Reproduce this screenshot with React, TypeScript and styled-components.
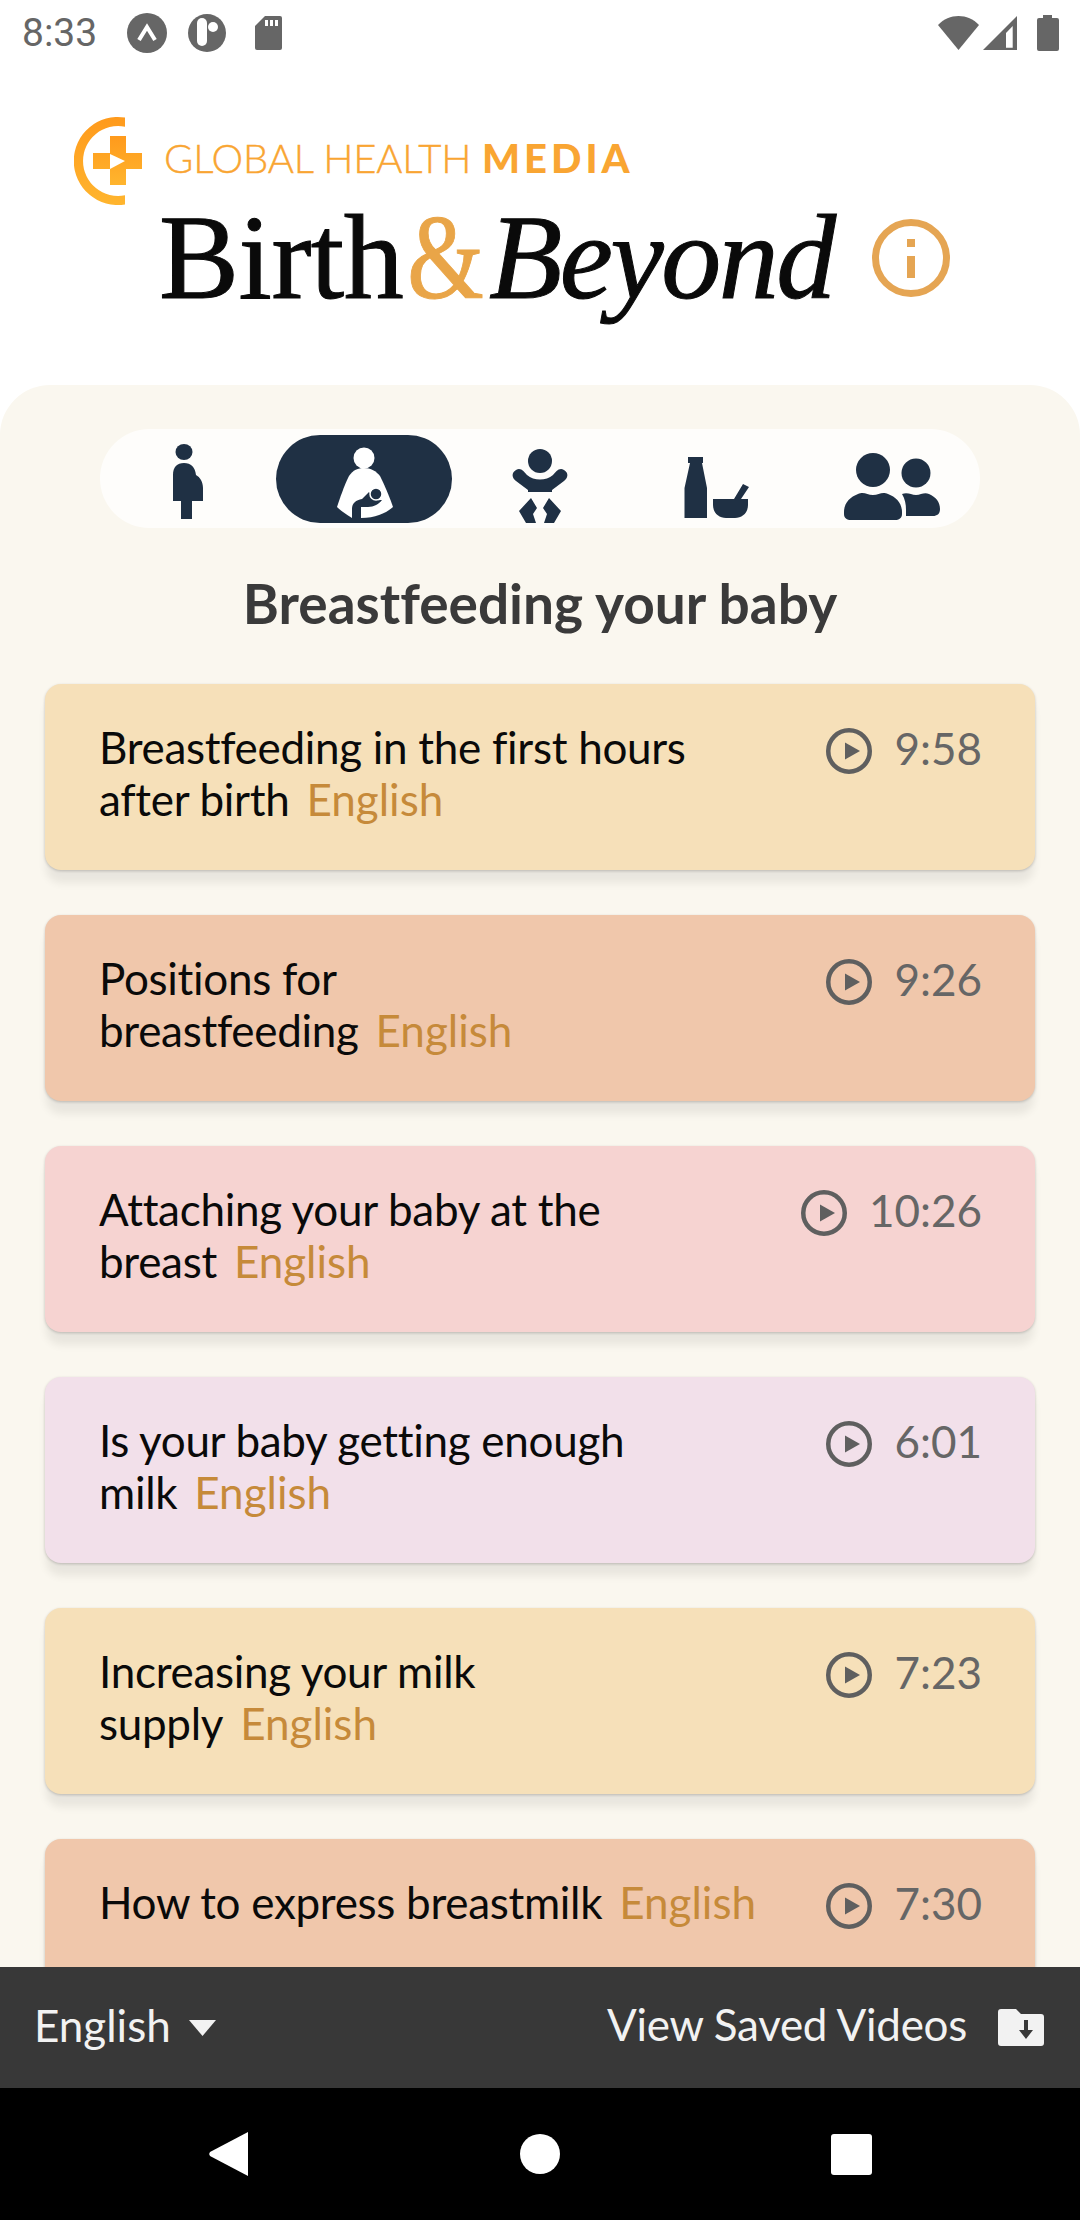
import * as React from "react";
import styled, { createGlobalStyle } from "styled-components";

const GlobalStyle = createGlobalStyle`
  html, body {
    margin: 0;
    padding: 0;
    background: #ffffff;
  }
  * {
    box-sizing: border-box;
  }
`;

const Screen = styled.div`
  width: 1080px;
  height: 2220px;
  display: flex;
  flex-direction: column;
  overflow: hidden;
  background: #ffffff;
  font-family: "Lato", "Liberation Sans", sans-serif;
  font-variant-ligatures: none;
`;

const StatusBar = styled.div`
  height: 66px;
  flex: none;
  display: flex;
  align-items: center;
  justify-content: space-between;
  padding: 0 21px 0 22px;
  color: #666666;
`;

const StatusGroup = styled.div`
  display: flex;
  align-items: center;
`;

const Clock = styled.span`
  font-family: "Roboto", sans-serif;
  font-size: 39px;
  font-weight: 400;
  width: 105px;
`;

const StatusIcon = styled.svg<{ $left?: number }>`
  display: block;
  margin-left: ${(p) => p.$left ?? 0}px;
`;

const Header = styled.header`
  flex: none;
  height: 319px;
  padding: 50px 0 0 74px;
`;

const LogoRow = styled.div`
  display: flex;
  align-items: center;
  gap: 21px;
  height: 90px;
`;

const LogoText = styled.div`
  color: #f9a532;
  font-size: 40px;
  line-height: 40px;
  font-weight: 300;
  white-space: nowrap;
  letter-spacing: -0.2px;
  -webkit-text-stroke: 0.4px #f9a532;
  margin-top: -6px;

  b {
    font-weight: 900;
    letter-spacing: 4px;
    -webkit-text-stroke: 0;
  }
`;

const TitleRow = styled.div`
  display: flex;
  align-items: center;
  height: 100px;
  margin-top: 2px;
  padding-left: 85px;
`;

const Title = styled.h1`
  margin: 0;
  font-family: "Liberation Serif", serif;
  font-size: 120px;
  line-height: 100px;
  font-weight: 400;
  color: #0a0a0a;
  white-space: nowrap;
  letter-spacing: -0.5px;
  -webkit-text-stroke: 1px #0a0a0a;

  em {
    letter-spacing: -2.5px;
  }
`;

const Ampersand = styled.span`
  display: inline-block;
  color: #e9a548;
  -webkit-text-stroke: 1px #e9a548;
  transform: scaleX(0.82);
  margin: 0 -3px 0 -4px;
`;

const InfoButton = styled.div`
  margin-left: 38px;
  display: flex;
`;

const Panel = styled.main`
  flex: 1;
  min-height: 0;
  overflow: hidden;
  background: #faf7ef;
  border-radius: 50px 50px 0 0;
  padding: 44px 45px 0;
`;

const TabBar = styled.nav`
  height: 99px;
  margin: 0 55px;
  display: flex;
  align-items: center;
  background: #fefdfb;
  border-radius: 50px;
`;

const Tab = styled.div<{ $active?: boolean }>`
  width: 176px;
  height: 88px;
  display: flex;
  justify-content: center;
  align-items: center;
  border-radius: 44px;
  background: ${(p) => (p.$active ? "#1f3044" : "transparent")};
`;

const Heading = styled.h2`
  margin: 0;
  height: 156px;
  padding-top: 40px;
  text-align: center;
  font-size: 55px;
  line-height: 70px;
  font-weight: 700;
  color: #3a3a3a;
`;

const CardList = styled.div`
  display: flex;
  flex-direction: column;
  gap: 45px;
`;

const Card = styled.article<{ $bg: string }>`
  flex: none;
  height: 186px;
  padding: 37px 53px 0 54px;
  display: flex;
  justify-content: space-between;
  align-items: flex-start;
  background: ${(p) => p.$bg};
  border-radius: 16px;
  box-shadow: 0 1px 3px rgba(0, 0, 0, 0.2), 0 14px 8px -1px rgba(0, 0, 0, 0.07);
`;

const CardTitle = styled.div`
  font-size: 44px;
  line-height: 52px;
  letter-spacing: -0.3px;
  color: #0a0a0a;
  white-space: nowrap;
`;

const Ligature = styled.span`
  font-variant-ligatures: common-ligatures;
`;

const Language = styled.span`
  color: #c68a3a;
  letter-spacing: 0;
  margin-left: 17px;
`;

const Duration = styled.div`
  display: flex;
  align-items: center;
  gap: 22px;
  margin-top: 1px;
  font-size: 44px;
  line-height: 52px;
  color: #666666;

  svg {
    margin-top: 5px;
  }
`;

const BottomBar = styled.div`
  flex: none;
  height: 121px;
  padding: 0 36px 0 34px;
  display: flex;
  align-items: center;
  justify-content: space-between;
  background: #383838;
  color: #f2f2f2;
  font-size: 44px;
`;

const BarItem = styled.div<{ $gap: number }>`
  display: flex;
  align-items: center;
  gap: ${(p) => p.$gap}px;
`;

const BarLabel = styled.span<{ $tight?: boolean }>`
  margin-top: ${(p) => (p.$tight ? "-8px" : "-6px")};
  letter-spacing: ${(p) => (p.$tight ? "-0.3px" : "0")};
`;

const NavBar = styled.div`
  flex: none;
  height: 132px;
  background: #000000;
  display: flex;
  align-items: center;
  justify-content: center;
  gap: 271px;
`;

const cards: { bg: string; lines: React.ReactNode[]; time: string }[] = [
  {
    bg: "#f6e0b9",
    lines: [
      <>
        Breastfeeding in the <Ligature>first</Ligature> hours
      </>,
      "after birth",
    ],
    time: "9:58",
  },
  { bg: "#f0c7ab", lines: ["Positions for", "breastfeeding"], time: "9:26" },
  { bg: "#f6d3d1", lines: ["Attaching your baby at the", "breast"], time: "10:26" },
  { bg: "#f2e0ea", lines: ["Is your baby getting enough", "milk"], time: "6:01" },
  { bg: "#f6e0b9", lines: ["Increasing your milk", "supply"], time: "7:23" },
  { bg: "#f0c7ab", lines: ["How to express breastmilk"], time: "7:30" },
];

const NAVY = "#1f3044";

const PlayIcon = () => (
  <svg width="46" height="46" viewBox="0 0 46 46">
    <circle cx="23" cy="23" r="20.75" fill="none" stroke="#5f5f5f" strokeWidth="4.5" />
    <path d="M19 14.5 L34 23 L19 31.5 Z" fill="#5f5f5f" />
  </svg>
);

const LogoMark = () => (
  <svg width="69" height="90" viewBox="74 115 69 90">
    <defs>
      <linearGradient id="logoFade" x1="0" y1="0" x2="0" y2="1">
        <stop offset="0" stopColor="#ff9a1c" />
        <stop offset="1" stopColor="#ffb52e" />
      </linearGradient>
    </defs>
    <path
      d="M125 116.6 A 44 44 0 1 0 125 203.4 L125 194.3 A 35 35 0 1 1 125 125.7 Z"
      fill="url(#logoFade)"
    />
    <path
      d="M110 135 H126 V152 H142 V168 H126 V184 H110 V168 H93 V152 H110 Z"
      fill="url(#logoFade)"
    />
    <path d="M110 153 L125 160 L110 168 Z" fill="#ffffff" />
  </svg>
);

const InfoIcon = () => (
  <svg width="78" height="78" viewBox="0 0 78 78">
    <circle cx="39" cy="39" r="35.5" fill="none" stroke="#e5a553" strokeWidth="7" />
    <rect x="35" y="20" width="8" height="8" fill="#e5a553" />
    <rect x="35" y="37" width="8" height="22" fill="#e5a553" />
  </svg>
);

const PregnantIcon = () => (
  <svg width="70" height="88" viewBox="153 435 70 88">
    <ellipse cx="184" cy="452" rx="8.5" ry="8" fill={NAVY} />
    <path
      d="M173 501 V475 C173 467 177 463 184 463 C191 463 195 467 196 475 C200 477 203 482 203 488 V501 H192 V519 H181 V501 Z"
      fill={NAVY}
    />
  </svg>
);

const MotherIcon = () => (
  <svg width="70" height="88" viewBox="329 435 70 88">
    <circle cx="364" cy="458" r="10.5" fill="#ffffff" />
    <path
      d="M349 476 C353 470 358 468 364 468 C371 468 376 471 380 476 C386 488 391 501 393 507 C386 513 376 518 361 518 H352 C347 515 341 511 337 507 C340 498 344 486 349 476 Z"
      fill="#ffffff"
    />
    <path
      d="M352 520 V509 C352 503 356 500 362 499 L369 492 L373 498 C376 501 380 500 382 500 C379 504 374 507 368 507 H361 V520 Z"
      fill={NAVY}
    />
    <circle cx="376" cy="494" r="6" fill={NAVY} stroke="#ffffff" strokeWidth="1.5" />
  </svg>
);

const BabyIcon = () => (
  <svg width="70" height="88" viewBox="505 435 70 88">
    <circle cx="540" cy="461" r="12" fill={NAVY} />
    <path
      d="M516 470 C521 467 524 472 527 475 C534 481 546 481 553 475 C556 472 559 467 564 470 C569 473 568 478 564 481 L552 490 V492 H528 V490 L516 481 C512 478 511 473 516 470 Z"
      fill={NAVY}
    />
    <path d="M531 498 L537 508 L533 514 L536 523 H526 L519 511 Z" fill={NAVY} />
    <path d="M549 498 L543 508 L547 514 L544 523 H554 L561 511 Z" fill={NAVY} />
  </svg>
);

const BottleIcon = () => (
  <svg width="70" height="88" viewBox="681 435 70 88">
    <path
      d="M688 457 H703 V463 H702 L707 488 V518 H684.5 V488 L690 463 H688 Z"
      fill={NAVY}
    />
    <path
      d="M713 499 H734 L743 484 L749 487 L741 499 H748 V505 C748 513 742 518 735 518 H726 C719 518 713 513 713 505 Z"
      fill={NAVY}
    />
  </svg>
);

const PeopleIcon = () => (
  <svg width="100" height="88" viewBox="842 435 100 88">
    <circle cx="873" cy="470" r="17" fill={NAVY} />
    <path
      d="M858 494 C864 491 867 495 873 495 C879 495 882 491 888 494 C896 497 902 503 902 512 V514 C902 518 899 520 895 520 H851 C847 520 844 518 844 514 V512 C844 503 850 497 858 494 Z"
      fill={NAVY}
    />
    <circle cx="916" cy="473" r="14.5" fill={NAVY} />
    <path
      d="M902 494 C908 492 911 495 916 495 C921 495 924 492 929 494 C936 497 940 502 940 509 C940 514 937 516 933 516 H906 V510 C906 504 905 499 902 494 Z"
      fill={NAVY}
    />
  </svg>
);

const StatusLeftIcons = () => (
  <>
    <svg width="40" height="40" viewBox="0 0 40 40">
      <circle cx="20" cy="20" r="20" fill="#666666" />
      <path d="M12 27 L20 14 L28 27" fill="none" stroke="#ffffff" strokeWidth="4" />
    </svg>
    <StatusIcon $left={21} width="38" height="38" viewBox="0 0 38 38">
      <circle cx="19" cy="19" r="19" fill="#666666" />
      <rect x="9" y="4" width="10" height="28" rx="5" fill="#ffffff" />
      <circle cx="25" cy="13" r="5" fill="#ffffff" />
    </StatusIcon>
    <StatusIcon $left={29} width="27" height="34" viewBox="0 0 27 34">
      <path d="M10 0 H25 A2 2 0 0 1 27 2 V32 A2 2 0 0 1 25 34 H2 A2 2 0 0 1 0 32 V10 Z" fill="#666666" />
      <rect x="10" y="4" width="3" height="6" fill="#ffffff" />
      <rect x="15" y="4" width="3" height="6" fill="#ffffff" />
      <rect x="20" y="4" width="3" height="6" fill="#ffffff" />
    </StatusIcon>
  </>
);

const StatusRightIcons = () => (
  <>
    <svg width="41" height="34" viewBox="0 0 41 34">
      <path d="M0 9 C11 -3 30 -3 41 9 L20.5 34 Z" fill="#666666" />
    </svg>
    <StatusIcon $left={4} width="34" height="34" viewBox="0 0 34 34">
      <path d="M0 34 L34 0 V34 Z" fill="#666666" />
      <path d="M23 17 L29.7 10 V31.7 H23 Z" fill="#ffffff" />
    </StatusIcon>
    <StatusIcon $left={20} width="22" height="36" viewBox="0 0 22 36">
      <path d="M6 0 H15 V3 H20 A2 2 0 0 1 22 5 V34 A2 2 0 0 1 20 36 H2 A2 2 0 0 1 0 34 V5 A2 2 0 0 1 2 3 H6 Z" fill="#666666" />
    </StatusIcon>
  </>
);

const FolderIcon = () => (
  <svg width="46" height="37" viewBox="0 0 46 37">
    <path
      d="M3 0 H18 L23 5 H43 A3 3 0 0 1 46 8 V34 A3 3 0 0 1 43 37 H3 A3 3 0 0 1 0 34 V3 A3 3 0 0 1 3 0 Z"
      fill="#f2f2f2"
    />
    <path d="M26 11 H30 V21 H35 L28 30 L21 21 H26 Z" fill="#383838" />
  </svg>
);

const App: React.FC = () => {
  return (
    <Screen>
      <GlobalStyle />
      <StatusBar>
        <StatusGroup>
          <Clock>8:33</Clock>
          <StatusLeftIcons />
        </StatusGroup>
        <StatusGroup>
          <StatusRightIcons />
        </StatusGroup>
      </StatusBar>

      <Header>
        <LogoRow>
          <LogoMark />
          <LogoText>
            GLOBAL HEALTH <b>MEDIA</b>
          </LogoText>
        </LogoRow>
        <TitleRow>
          <Title>
            Birth<Ampersand>&amp;</Ampersand>
            <em>Beyond</em>
          </Title>
          <InfoButton>
            <InfoIcon />
          </InfoButton>
        </TitleRow>
      </Header>

      <Panel>
        <TabBar>
          <Tab>
            <PregnantIcon />
          </Tab>
          <Tab $active>
            <MotherIcon />
          </Tab>
          <Tab>
            <BabyIcon />
          </Tab>
          <Tab>
            <BottleIcon />
          </Tab>
          <Tab>
            <PeopleIcon />
          </Tab>
        </TabBar>
        <Heading>Breastfeeding your baby</Heading>
        <CardList>
          {cards.map((card) => (
            <Card key={card.time} $bg={card.bg}>
              <CardTitle>
                {card.lines.map((line, i) => (
                  <div key={i}>
                    {line}
                    {i === card.lines.length - 1 && <Language>English</Language>}
                  </div>
                ))}
              </CardTitle>
              <Duration>
                <PlayIcon />
                {card.time}
              </Duration>
            </Card>
          ))}
        </CardList>
      </Panel>

      <BottomBar>
        <BarItem $gap={18}>
          <BarLabel>English</BarLabel>
          <svg width="27" height="16" viewBox="0 0 27 16">
            <path d="M0 0 H27 L13.5 16 Z" fill="#f2f2f2" />
          </svg>
        </BarItem>
        <BarItem $gap={31}>
          <BarLabel $tight>View Saved Videos</BarLabel>
          <FolderIcon />
        </BarItem>
      </BottomBar>

      <NavBar>
        <svg width="41" height="44" viewBox="0 0 41 44">
          <path d="M40 0 V44 L2 24 A3 3 0 0 1 2 20 Z" fill="#ffffff" />
        </svg>
        <svg width="40" height="40" viewBox="0 0 40 40">
          <circle cx="20" cy="20" r="20" fill="#ffffff" />
        </svg>
        <svg width="41" height="41" viewBox="0 0 41 41">
          <rect width="41" height="41" rx="3" fill="#ffffff" />
        </svg>
      </NavBar>
    </Screen>
  );
};

export default App;
